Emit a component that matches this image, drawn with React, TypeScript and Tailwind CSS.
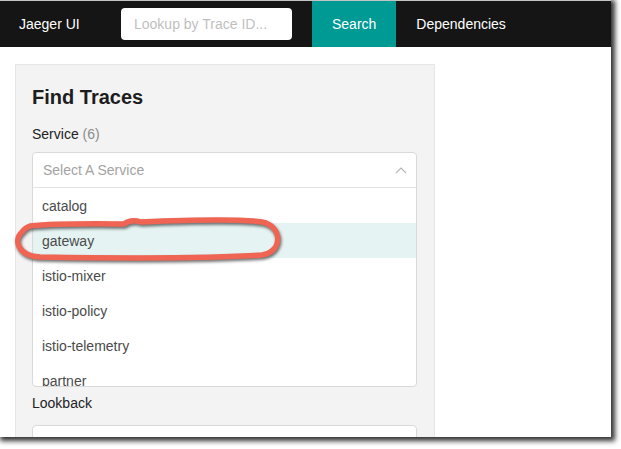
import React from "react";

const services = ["catalog", "gateway", "istio-mixer", "istio-policy", "istio-telemetry", "partner"];

function ChevronUp() {
  return (
    <svg width="12" height="8" viewBox="0 0 12 8" className="shrink-0">
      <path d="M1 7 L6 2 L11 7" fill="none" stroke="#b5b5b5" strokeWidth="1.1" />
    </svg>
  );
}

function ChevronDown() {
  return (
    <svg width="12" height="8" viewBox="0 0 12 8" className="shrink-0">
      <path d="M1 1 L6 6 L11 1" fill="none" stroke="#b5b5b5" strokeWidth="1.1" />
    </svg>
  );
}

export default function App() {
  return (
    <div className="w-[621px] h-[449px] bg-white overflow-hidden" style={{ fontFamily: '"Liberation Sans", Arial, sans-serif' }}>
      <div className="relative w-[611px] h-[437px] bg-white shadow-[2px_2px_5px_2px_rgba(0,0,0,0.8)]">
        <div className="w-full h-full overflow-hidden relative">
          <div className="h-px bg-[#c4c4c4]" />
          <div className="h-[46px] bg-[#151515] flex items-center text-[14px] text-white">
            <div className="pl-[19px] w-[121px]">Jaeger UI</div>
            <div className="w-[171px] h-[32px] bg-white rounded-[4px] flex items-center pl-[13px] text-[#bfbfbf]">
              Lookup by Trace ID...
            </div>
            <div className="ml-[20px] h-full flex items-center bg-[#009a94] px-5">Search</div>
            <div className="h-full flex items-center px-5">Dependencies</div>
          </div>
          <div className="pl-[15px] pt-[17px]">
            <div className="w-[420px] h-[400px] bg-[#f3f3f3] border border-[#e6e6e6] pl-4 pr-[17px] pt-[18px]">
              <h2 className="text-[20px] leading-[28px] font-bold text-[#1d1d1d]">Find Traces</h2>
              <div className="mt-[13px] text-[14px] leading-[20px] text-[#222]">
                Service <span className="text-[#8c8c8c]">(6)</span>
              </div>
              <div className="mt-[8px] border border-[#d9d9d9] rounded-[4px] bg-white overflow-hidden">
                <div className="h-[35px] border-b border-[#e3e3e3] flex items-center justify-between pl-[10px] pr-[9px] text-[14px] text-[#a3a3a3]">
                  <span>Select A Service</span>
                  <ChevronUp />
                </div>
                <div className="h-[198px] overflow-hidden">
                  {services.map((s) => (
                    <div
                      key={s}
                      className={`h-[35px] flex items-center pt-px pl-[9px] text-[14px] text-[#4a4a4a] ${s === "gateway" ? "bg-[#e5f4f3]" : ""}`}
                    >
                      {s}
                    </div>
                  ))}
                </div>
              </div>
              <div className="mt-[6px] text-[14px] leading-[20px] text-[#222]">Lookback</div>
              <div className="mt-[12px] h-[35px] border border-[#d9d9d9] rounded-[4px] bg-white flex items-center justify-between pl-[10px] pr-[9px] text-[14px] text-[#4a4a4a]">
                <span>Last Hour</span>
                <ChevronDown />
              </div>
            </div>
          </div>
          <svg
            className="absolute left-0 top-0 pointer-events-none drop-shadow-[1px_2px_1.5px_rgba(0,0,0,0.55)]"
            width="611"
            height="437"
            viewBox="0 0 611 437"
          >
            <path
              d="M30 226 C60 223 110 224 124 224 C129 220 135 220 141 222 C190 220 240 219 262 222 C283 226 283 252 262 255 C200 259 100 258 40 257 C18 256 13 240 22 232 C24 229 27 227 30 226 Z"
              fill="none"
              stroke="#ef6453"
              strokeWidth="5.5"
              strokeLinejoin="round"
            />
          </svg>
        </div>
      </div>
    </div>
  );
}
